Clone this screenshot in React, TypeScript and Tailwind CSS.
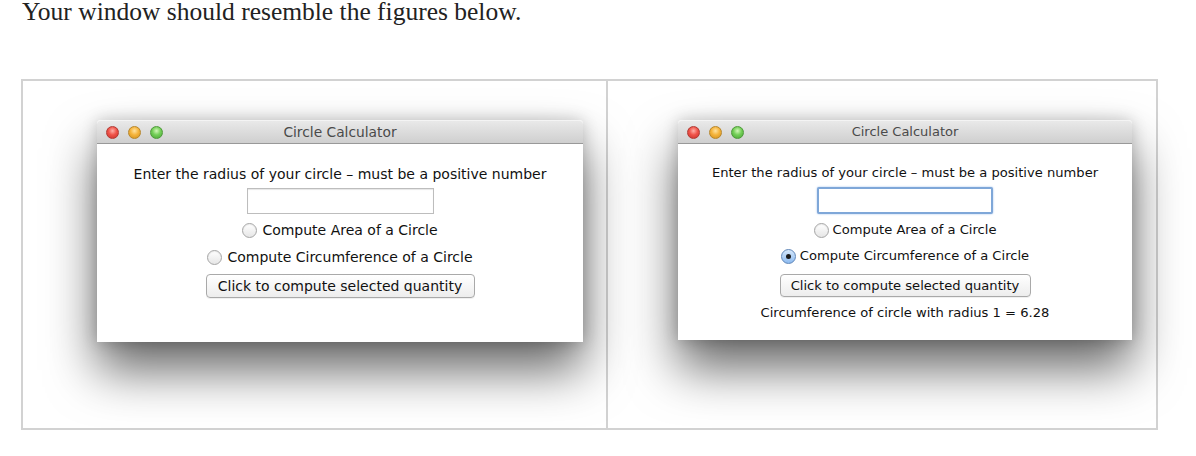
import React from "react";

function Lights() {
  return (
    <div className="flex items-center gap-[9px]">
      <span className="block w-[13px] h-[13px] rounded-full border border-[#b13a33] bg-[radial-gradient(circle_at_50%_35%,#ffb0a8_0%,#f0544a_45%,#c9302a_100%)]" />
      <span className="block w-[13px] h-[13px] rounded-full border border-[#b7862a] bg-[radial-gradient(circle_at_50%_35%,#ffe2a0_0%,#f5b43c_45%,#d18f1e_100%)]" />
      <span className="block w-[13px] h-[13px] rounded-full border border-[#4e9a3a] bg-[radial-gradient(circle_at_50%_35%,#d2f7b8_0%,#74cf58_45%,#47a534_100%)]" />
    </div>
  );
}

function Radio({ checked }: { checked?: boolean }) {
  if (checked) {
    return (
      <span className="flex items-center justify-center w-[15px] h-[15px] rounded-full border border-[#5f86b8] bg-[linear-gradient(#d6e8fb,#8dbbf0)]">
        <span className="block w-[5px] h-[5px] rounded-full bg-[#1b1b1b]" />
      </span>
    );
  }
  return (
    <span className="block w-[15px] h-[15px] rounded-full border border-[#a5a5a5] bg-[linear-gradient(#ffffff,#e6e6e6)] shadow-[inset_0_1px_1px_rgba(0,0,0,0.08)]" />
  );
}

export default function App() {
  const font = "font-['DejaVu_Sans','Liberation_Sans',sans-serif]";
  return (
    <div className="w-[1196px] h-[456px] bg-white overflow-hidden relative">
      <div className="pl-[22px] h-[79px]">
        <p className="font-['Liberation_Serif',serif] text-[25.5px] leading-[24px] text-[#222]">
          Your window should resemble the figures below.
        </p>
      </div>
      <div className="ml-[21px] w-[1137px] h-[351px] border-2 border-[#d2d2d2] flex">
        {/* left panel */}
        <div className="w-[585px] h-full border-r-2 border-[#d2d2d2] pl-[74px] pt-[39px]">
          <div className={`w-[486px] rounded-t-[4px] shadow-[0_28px_50px_rgba(0,0,0,0.6),0_0_16px_rgba(0,0,0,0.2)] ${font}`}>
            <div className="h-[24px] rounded-t-[4px] bg-[linear-gradient(#e9e9e9,#cfcfcf)] border-b border-[#999] border-t border-t-[#f4f4f4] flex items-center px-[9px] relative">
              <Lights />
              <div className="absolute inset-0 flex items-center justify-center text-[13.8px] text-[#4a4a4a]">
                Circle Calculator
              </div>
            </div>
            <div className="h-[198px] bg-white flex flex-col items-center pt-[22px] text-[14px] text-[#111]">
              <div className="h-[16px] leading-[16px]">Enter the radius of your circle – must be a positive number</div>
              <div className="mt-[6px] w-[187px] h-[26px] border border-[#bdbdbd] shadow-[inset_0_1px_1px_rgba(0,0,0,0.1)] bg-white" />
              <div className="mt-[7px] h-[18px] flex items-center gap-[5px]">
                <Radio />
                <span className="leading-[18px]">Compute Area of a Circle</span>
              </div>
              <div className="mt-[9px] h-[18px] flex items-center gap-[5px]">
                <Radio />
                <span className="leading-[18px]">Compute Circumference of a Circle</span>
              </div>
              <div className="mt-[8px] w-[269px] h-[24px] rounded-[4px] border border-[#a9a9a9] bg-[linear-gradient(#ffffff,#ededed)] shadow-[0_1px_0_rgba(0,0,0,0.06)] flex items-center justify-center">
                Click to compute selected quantity
              </div>
            </div>
          </div>
        </div>
        {/* right panel */}
        <div className="flex-1 h-full pl-[70px] pt-[39px]">
          <div className={`w-[454px] rounded-t-[4px] shadow-[0_28px_50px_rgba(0,0,0,0.6),0_0_16px_rgba(0,0,0,0.2)] ${font}`}>
            <div className="h-[24px] rounded-t-[4px] bg-[linear-gradient(#e9e9e9,#cfcfcf)] border-b border-[#999] border-t border-t-[#f4f4f4] flex items-center px-[9px] relative">
              <Lights />
              <div className="absolute inset-0 flex items-center justify-center text-[13px] text-[#4a4a4a]">
                Circle Calculator
              </div>
            </div>
            <div className="h-[196px] bg-white flex flex-col items-center pt-[21px] text-[13.1px] text-[#111]">
              <div className="h-[16px] leading-[16px]">Enter the radius of your circle – must be a positive number</div>
              <div className="mt-[6px] w-[176px] h-[27px] border-2 border-[#7fa7d8] rounded-[2px] shadow-[0_0_2px_rgba(80,140,220,0.6)] bg-white" />
              <div className="mt-[7px] h-[18px] flex items-center gap-[4px]">
                <Radio />
                <span className="leading-[18px]">Compute Area of a Circle</span>
              </div>
              <div className="mt-[8px] h-[18px] flex items-center gap-[4px]">
                <Radio checked />
                <span className="leading-[18px]">Compute Circumference of a Circle</span>
              </div>
              <div className="mt-[9px] w-[251px] h-[23px] rounded-[4px] border border-[#a9a9a9] bg-[linear-gradient(#ffffff,#ededed)] shadow-[0_1px_0_rgba(0,0,0,0.06)] flex items-center justify-center">
                Click to compute selected quantity
              </div>
              <div className="mt-[8px] h-[16px] leading-[16px]">Circumference of circle with radius 1 = 6.28</div>
            </div>
          </div>
        </div>
      </div>
    </div>
  );
}
